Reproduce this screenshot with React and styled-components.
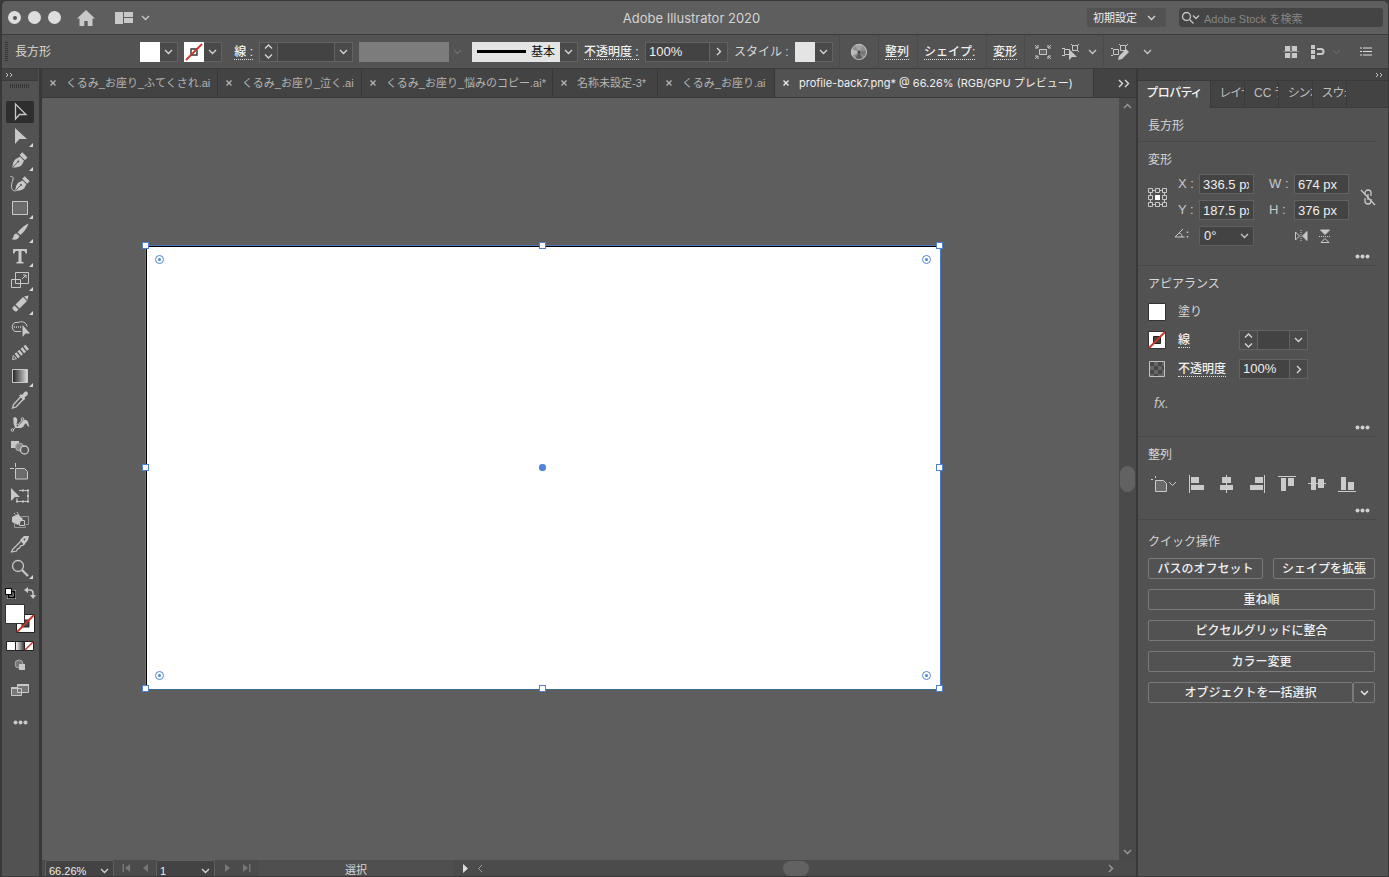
import React from "react";
import styled, { createGlobalStyle, css } from "styled-components";

const Global = createGlobalStyle`
  * { box-sizing: border-box; }
  html, body, #root { height: 100%; }
  body {
    margin: 0;
    background: #3a3a3a;
    color: #d6d6d6;
    font: 12px/16px "Liberation Sans", "Noto Sans CJK JP", sans-serif;
  }
  button, input, select { font: inherit; color: inherit; border: 0; padding: 0; margin: 0; background: none; outline: 0; border-radius: 0; }
  button { display: flex; align-items: center; justify-content: center; cursor: pointer; }
  h1, h2 { margin: 0; font: inherit; }
  svg { display: block; flex: none; }
  a { color: inherit; }
`;

const Window = styled.div`
  display: flex;
  flex-direction: column;
  min-height: 100vh;
  border: 1px solid #383838;
  border-left-width: 2px;
  border-radius: 6px 6px 0 0;
  overflow: hidden;
  background: #383838;
`;

/* ---------- title bar ---------- */
const TitleBar = styled.header`
  display: grid;
  grid-template-columns: 1fr auto 1fr;
  align-items: center;
  height: 34px;
  padding: 0 5px 0 6px;
  background: #5e5e5e;
  border-bottom: 1px solid #3c3c3c;
`;
const TitleLeft = styled.div`
  display: flex;
  align-items: center;
  gap: 7px;
`;
const Light = styled.button`
  width: 13px;
  height: 13px;
  border-radius: 50%;
  background: #dedede;
  &::after {
    content: "";
    width: 4px;
    height: 4px;
    border-radius: 50%;
    background: ${(p) => (p.$dot ? "#555" : "transparent")};
  }
`;
const TitleButton = styled.button`
  gap: 8px;
  color: #c9c9c9;
  margin-left: ${(p) => p.$ml}px;
`;
const Title = styled.h1`
  padding-right: 8px;
  font-family: Inter, sans-serif;
  font-size: 13px;
  color: #d4d4d4;
`;
const TitleRight = styled.div`
  display: flex;
  justify-content: flex-end;
  gap: 13px;
`;
const SelectWrap = styled.span`
  display: flex;
  position: relative;
  width: ${(p) => p.$w}px;
  height: ${(p) => p.$h}px;
  svg { position: absolute; right: ${(p) => p.$r || 5}px; top: 50%; margin-top: -3px; pointer-events: none; }
`;
const Select = styled.select`
  appearance: none;
  width: 100%;
  height: 100%;
  padding: 0 18px 0 ${(p) => p.$pl || 4}px;
  color: #eee;
  background: ${(p) => p.$bg || "#434343"};
  border: 1px solid ${(p) => p.$line || "#606060"};
  border-radius: 2px;
  font-size: ${(p) => p.$fs || 13}px;
`;
const Search = styled.label`
  display: flex;
  align-items: center;
  gap: 4px;
  width: 204px;
  height: 19px;
  padding-left: 2px;
  color: #c4c4c4;
  background: #444;
  border-radius: 3px;
  input { flex: 1; min-width: 0; height: 19px; padding-top: 2px; font-size: 11px; }
  input::placeholder { color: #868686; opacity: 1; }
`;

/* ---------- control bar ---------- */
const ControlBar = styled.div`
  display: flex;
  align-items: center;
  gap: 6px;
  height: 34px;
  padding: 0 8px 0 3px;
  background: #535353;
  border-bottom: 1px solid #3c3c3c;
  > * { flex: none; }
`;
const Grip = styled.span`
  width: ${(p) => (p.$h ? 20 : 3)}px;
  height: ${(p) => (p.$h ? 4 : 20)}px;
  background: repeating-linear-gradient(${(p) => (p.$h ? "90deg" : "180deg")}, #353535 0 1px, transparent 1px 2px);
`;
const ObjectName = styled.span`
  width: 120px;
  padding-left: 1px;
`;
const Rule = styled.span`
  width: 1px;
  height: 34px;
  background: #4b4b4b;
`;
const BarLabel = styled.span`
  width: ${(p) => p.$w}px;
  text-align: ${(p) => p.$align || "left"};
  white-space: nowrap;
`;
const BarLink = styled.a`
  color: #f0f0f0;
  font-weight: 500;
  line-height: 14px;
  text-decoration: none;
  border-bottom: 1px dotted #ddd;
  white-space: nowrap;
`;
const Combo = styled.div`
  display: flex;
  height: 20px;
  border: 1px solid #626262;
  background: #4a4a4a;
  > button { width: 17px; }
`;
const Swatch = styled.button`
  && { width: ${(p) => p.$w || 20}px; }
  height: 20px;
  margin: -1px 0 -1px -1px;
  background: ${(p) => p.$bg};
  color: #111;
  gap: 5px;
  padding: 0 5px;
`;
const Line = styled.span`
  flex: 1;
  height: 3px;
  background: #000;
`;
const Field = styled.input`
  width: ${(p) => p.$w}px;
  padding: 0 4px 0 3px;
  font-size: 13px;
  color: #eee;
  background: #434343;
  border: solid #626262;
  border-width: ${(p) => (p.$box ? "1px" : "0 1px 0 0")};
  height: ${(p) => (p.$box ? "20px" : "auto")};
  ${(p) => p.$mid && css`border-left-width: 1px;`}
`;
const Flat = styled.div`
  display: flex;
  width: 107px;
  height: 20px;
  opacity: 0.9;
  &::before { content: ""; width: 90px; background: #818181; }
  button { width: 17px; color: #707070; }
`;
const IconButton = styled.button`
  width: ${(p) => p.$w}px;
  height: 24px;
  gap: 6px;
  color: ${(p) => p.$color || "#c8c8c8"};
  justify-content: ${(p) => (p.$start ? "space-between" : "center")};
`;
const BarEnd = styled.div`
  display: flex;
  align-items: center;
  margin-left: auto;
  gap: 11px;
`;

/* ---------- body ---------- */
const Body = styled.div`
  display: flex;
  flex: 1;
  min-height: 0;
  gap: 2px;
`;
const ToolBox = styled.aside`
  width: 37px;
  background: #525252;
  display: flex;
  flex-direction: column;
  align-items: center;
  padding-right: 1px;
`;
const Strip = styled.div`
  display: flex;
  align-items: center;
  align-self: stretch;
  justify-content: ${(p) => (p.$end ? "flex-end" : "flex-start")};
  height: 12px;
  padding: 0 5px 0 3px;
  color: #c0c0c0;
  background: #434343;
  border-bottom: 1px solid #3a3a3a;
`;
const GripRow = styled.div`
  height: 19px;
  padding-top: 3px;
`;
const Tool = styled.button`
  position: relative;
  width: 28px;
  height: 22px;
  margin: 1px 0;
  border-radius: 2px;
  color: #c8c8c8;
  background: ${(p) => (p.$on ? "#2e2e2e" : "none")};
  &::after {
    content: "";
    display: ${(p) => (p.$more ? "block" : "none")};
    position: absolute;
    right: 1px;
    bottom: 0;
    width: 4px;
    height: 4px;
    background: #d8d8d8;
    clip-path: polygon(100% 0, 100% 100%, 0 100%);
  }
`;
const ToolRule = styled.hr`
  width: 28px;
  margin: 2px 0 2px;
  border: 0;
  border-top: 1px solid #484848;
`;
const ToolExtra = styled.button`
  width: 34px;
  height: ${(p) => p.$h}px;
  color: #c8c8c8;
`;
const Pair = styled.div`
  display: flex;
  justify-content: space-between;
  width: 32px;
  height: 15px;
  button { color: #c8c8c8; }
`;

const Document = styled.main`
  display: flex;
  flex-direction: column;
  flex: 1;
  min-width: 0;
  margin-left: 1px;
`;
const Tabs = styled.nav`
  display: flex;
  height: 29px;
  background: #434343;
  border-bottom: 1px solid #383838;
`;
const Tab = styled.div`
  display: flex;
  align-items: center;
  flex: none;
  width: ${(p) => p.$w}px;
  padding-left: 7px;
  gap: 9px;
  font-size: 11px;
  white-space: nowrap;
  color: ${(p) => (p.$on ? "#eee" : "#b4b4b4")};
  background: ${(p) => (p.$on ? "#525252" : "none")};
  border-right: 1px solid #383838;
  a {
    text-decoration: none;
    ${(p) => p.$on && css`font-family: Inter, "Noto Sans CJK JP", sans-serif;`}
  }
`;
const TabsMore = styled.button`
  margin-left: auto;
  width: 24px;
  color: #ddd;
`;
const View = styled.div`
  display: flex;
  flex: 1;
  min-height: 0;
`;
const Canvas = styled.section`
  position: relative;
  flex: 1;
  min-width: 0;
  background: #5e5e5e;
  overflow: hidden;
`;
const Artboard = styled.div`
  position: absolute;
  left: 103px;
  top: 147px;
  width: 796px;
  height: 445px;
  background: #fff;
  border: 1px solid #4a76c4;
  border-bottom-color: #3a6b8c;
  box-shadow: inset 1px 1px 0 #000;
`;
const Handle = styled.i`
  position: absolute;
  left: ${(p) => p.$x}%;
  top: ${(p) => p.$y}%;
  width: 7px;
  height: 7px;
  margin: -4px 0 0 -4px;
  background: #fff;
  border: 1px solid #4f80c8;
`;
const Corner = styled.i`
  position: absolute;
  ${(p) => p.$h}: 9px;
  ${(p) => p.$v}: 9px;
  width: 9px;
  height: 9px;
  border: 1px solid #4f86d8;
  border-radius: 50%;
  &::after {
    content: "";
    position: absolute;
    inset: 2px;
    border-radius: 50%;
    background: #4f86d8;
  }
`;
const Center = styled.i`
  position: absolute;
  left: 50%;
  top: 50%;
  width: 7px;
  height: 7px;
  margin: -4px;
  border-radius: 3px;
  background: #4f86d8;
`;
const VScroll = styled.div`
  display: flex;
  flex-direction: column;
  align-items: center;
  justify-content: space-between;
  width: 17px;
  padding: 5px 1px;
  color: #9c9c9c;
  background: #4a4a4a;
`;
const Thumb = styled.span`
  width: ${(p) => (p.$h ? 26 : 15)}px;
  height: ${(p) => (p.$h ? 15 : 26)}px;
  border-radius: 8px;
  background: #626262;
`;
const Status = styled.footer`
  display: flex;
  height: 16px;
  background: #4b4b4b;
  padding-left: 3px;
  overflow: hidden;
`;
const Nav = styled.div`
  display: flex;
  align-items: center;
  justify-content: center;
  gap: 9px;
  width: ${(p) => p.$w}px;
  color: #777;
`;
const Mode = styled.div`
  width: 194px;
  text-align: center;
  font-size: 11px;
  line-height: 20px;
  background: #4f4f4f;
`;
const HScroll = styled.div`
  display: flex;
  flex: 1;
  align-items: center;
  justify-content: space-between;
  padding: 0 22px 0 10px;
  color: #9c9c9c;
`;

/* ---------- properties panel ---------- */
const Panel = styled.aside`
  width: 250px;
  background: #525252;
`;
const PanelTabs = styled.nav`
  display: flex;
  height: 27px;
  background: #434343;
  border-bottom: 1px solid #3d3d3d;
`;
const PanelTab = styled.a`
  width: ${(p) => (p.$on ? 73 : 34)}px;
  height: ${(p) => (p.$on ? 27 : 26)}px;
  padding-left: 9px;
  overflow: hidden;
  white-space: nowrap;
  line-height: 25px;
  font-feature-settings: "palt";
  text-decoration: none;
  color: ${(p) => (p.$on ? "#f2f2f2" : "#bdbdbd")};
  font-weight: ${(p) => (p.$on ? 500 : 400)};
  background: ${(p) => (p.$on ? "#525252" : "none")};
  border-right: 1px solid #3a3a3a;
`;
const Section = styled.section`
  display: flex;
  flex-direction: column;
  height: ${(p) => p.$h}px;
  margin-right: 12px;
  padding: 10px 0 0 10px;
  border-bottom: ${(p) => (p.$last ? 0 : 1)}px solid #484848;
`;
const Heading = styled.h2`
  line-height: 17px;
`;
const QuickHeading = styled(Heading)`
  padding-top: 4px;
`;
const More = styled.button`
  align-self: flex-end;
  margin: auto 6px 4px 0;
  height: 10px;
  color: #cfcfcf;
`;
const TransformGrid = styled.div`
  display: grid;
  grid-template-columns: 30px 21px 55px 15px 25px 55px 1fr;
  grid-template-rows: 20px 20px 20px;
  row-gap: 6px;
  align-items: center;
  padding-top: 5px;
  color: #c8c8c8;
  font-size: 13px;
`;
const Reference = styled.button`
  grid-row: 1 / 3;
  justify-self: start;
`;
const FieldLabel = styled.label`
  grid-column: ${(p) => p.$c};
  white-space: nowrap;
`;
const AngleLabel = styled.span`
  grid-column: 1 / 3;
  justify-self: end;
  padding: 0 10px 6px 0;
`;
const LinkButton = styled.button`
  grid-column: 7;
  grid-row: 1 / 3;
  justify-self: end;
`;
const Flips = styled.div`
  grid-column: 5 / 7;
  display: flex;
  gap: 8px;
  padding-left: 24px;
`;
const Row = styled.div`
  display: flex;
  align-items: center;
  height: 20px;
  margin-top: ${(p) => p.$mt}px;
`;
const Chip = styled.button`
  width: 18px;
  height: 18px;
  margin-right: 12px;
`;
const RowName = styled.span`
  width: 61px;
`;
const Fx = styled.button`
  margin-left: 6px;
  font-size: 14px;
  font-style: italic;
  color: #c0c0c0;
`;
const AlignRow = styled.div`
  display: flex;
  align-items: center;
  gap: 8px;
  padding: 8px 0 0 3px;
  color: #cbcbcb;
  button { width: 22px; height: 24px; }
  button:first-child { width: 26px; margin-right: 1px; gap: 1px; }
`;
const Actions = styled.div`
  display: flex;
  flex-wrap: wrap;
  gap: 10px;
  padding-top: 7px;
  margin-right: 1px;
`;
const Action = styled.button`
  flex: ${(p) => p.$flex || "1 0 100%"};
  height: 21px;
  padding-top: 1px;
  border: 1px solid #7a7a7a;
  border-radius: 2px;
  color: #f0f0f0;
  font-weight: 500;
`;
const Split = styled.div`
  display: flex;
  flex: 1 0 100%;
`;

/* ---------- glyphs ---------- */
const Svg = ({ w = 20, h = w, children, ...rest }) => (
  <svg width={w} height={h} viewBox={`0 0 ${w} ${h}`} fill="none" stroke="currentColor" aria-hidden="true" {...rest}>
    {children}
  </svg>
);
const Down = () => <Svg w={9} h={6} strokeWidth="1.3"><path d="M1 1l3.5 3.5L8 1" /></Svg>;
const Up = () => <Svg w={9} h={6} strokeWidth="1.3"><path d="M1 5l3.5-3.5L8 5" /></Svg>;
const Right = () => <Svg w={6} h={9} strokeWidth="1.4"><path d="M1 1l3.5 3.5L1 8" /></Svg>;
const Double = ({ big }) =>
  big ? <Svg w={12} h={9} strokeWidth="1.4"><path d="M1 1l3.5 3.5L1 8M7 1l3.5 3.5L7 8" /></Svg>
    : <Svg w={8} h={6}><path d="M1 1l2 2-2 2M5 1l2 2-2 2" /></Svg>;
const Cross = () => <Svg w={8} strokeWidth="1.3"><path d="M1.500 1.500l5 5m0-5l-5 5" /></Svg>;
const Dots = () => <Svg w={15} h={5} fill="currentColor" stroke="none"><circle cx="2.500" cy="2.500" r="2" /><circle cx="7.500" cy="2.500" r="2" /><circle cx="12.500" cy="2.500" r="2" /></Svg>;
const Spin = () => <Svg w={9} h={15} strokeWidth="1.3"><path d="M1 4.500L4.500 1 8 4.500M1 10.500L4.500 14 8 10.500" /></Svg>;
const Tri = ({ flip, bar }) => (
  <Svg w={9} h={8} fill="currentColor" stroke="none">
    <g transform={flip ? "matrix(-1 0 0 1 9 0)" : undefined}>
      <path d="M1 0v8l5-4z" />{bar && <path d="M7 0h1.500v8H7z" />}
    </g>
  </Svg>
);
const NoneStroke = () => (
  <Svg w={20} stroke="none"><path fill="#fff" d="M0 0h20v20H0z" /><path stroke="#333" strokeWidth="1.400" d="M7 7h6v6H7z" /><path stroke="#c8372d" strokeWidth="1.800" d="M2 18L18 2" /></Svg>
);

const penNib = (
  <>
    <path fill="currentColor" stroke="none" d="M2 18.500C2.500 14 3.500 10.500 6 8.500l5-2.500 4.500 4.500-2.500 5c-2 2.500-6 3-11 3z" />
    <path fill="currentColor" stroke="none" d="M10.500 4L13.500 1 19.500 7 16.500 10z" />
    <path stroke="#525252" strokeWidth="1" d="M2.500 18l6-6" />
    <circle cx="9" cy="11.500" r="1.200" fill="#525252" stroke="none" />
  </>
);

const tools = [
  ["選択ツール", 0, <path d="M5.500 2v15l4-4.500h6.500z" strokeWidth="1.300" />],
  ["ダイレクト選択ツール", 1, <path d="M5 2v16l4.500-5h7.500z" fill="currentColor" stroke="none" />],
  ["ペンツール", 1, <g transform="translate(.5 1.500) scale(.87)">{penNib}</g>],
  ["曲線ツール", 0, <><g transform="translate(3.500 1.500) scale(.83)">{penNib}</g><path d="M.5 2.500c3.500-.5 3 2.500 1.500 6-1.500 5 0 8.500 3.500 8.500" /></>],
  ["長方形ツール", 1, <path d="M2.500 3.500h15v13h-15z" fill="#6b6b6b" />],
  ["ブラシツール", 1, <g fill="currentColor" stroke="none"><path d="M18.500 1.500C15 3 10 7 7.500 10.500l3 2.500C14 10 17.500 5 18.500 1.500z" /><path d="M6.500 11.500c-2 0-2.800 1.500-3 3s-1 2-2 2.500c3 1.500 7 .8 8-3z" /></g>],
  ["文字ツール", 1, <path d="M3 3h14v4.500h-1.500C15.300 5.500 14.500 5 13 5h-1.500v10c0 .8.500 1 2 1v1.500h-7V16c1.500 0 2-.2 2-1V5H7c-1.500 0-2.300.5-2.500 2.500H3z" fill="currentColor" stroke="none" />],
  ["拡大・縮小ツール", 1, <><path d="M5.500 2.500h13v11h-13zM1.500 9.500h9v8h-9z" /><path d="M12 9l4-4m-3 0h3v3" /></>],
  ["鉛筆ツール", 1, <g fill="currentColor" stroke="none"><path d="M5.500 10.500L13 3l4 4-7.500 7.500zM14 2.500L18.500 1.500 17.500 6zM4.500 11.500l4 4-2 2C5 18 2 15 2.500 13.500z" /></g>],
  ["シェイプ形成ツール", 0, <><path d="M5 13.500a5 5 0 0 1 0-9h3c4-2 8.500 0 9 4M5 13.500h6" /><path strokeDasharray="1 1" d="M4 9h8" strokeWidth="1.500" /><path d="M12.500 7v12l3-3.500H20z" fill="currentColor" stroke="none" /></>],
  ["Shaper ツール", 0, <><path d="M2.500 17.500l.8-4 3.200 3.200z" /><path d="M5.500 11l3.500 4.500M8.500 8.500l3.500 4.500M11.500 6l3.500 4.500M14.500 3.500L18 8" strokeWidth="2.500" /></>],
  ["グラデーションツール", 1, <><defs><linearGradient id="tg"><stop stopColor="#222" /><stop offset="1" stopColor="#ddd" /></linearGradient></defs><path d="M2.500 3.500h15v13h-15z" fill="url(#tg)" /></>],
  ["スポイトツール", 0, <><path d="M11 6.500l-7.500 8-1 3.500 3.500-1L13.500 9" strokeWidth="1.300" /><path d="M9 5.500l2-1.200 1 .7 2.500-3c2-1.500 4.500 1 3 3l-3 2.500.7 1.200-1.500 1.800z" fill="currentColor" stroke="none" /></>],
  ["パペットワープツール", 0, <><path d="M3 4c3-2 5 1 4 4s0 4 2.500 2.500S13 5 16 6s2 4 3.500 6.500C17 13 17 9 15.500 9.500S14 14 10.500 14 5 15 4 11 4 7 3 4z" fill="currentColor" stroke="none" /><path d="M3 16l4-4 6-7" /><circle cx="2.500" cy="16" r="1.300" fill="#525252" /><circle cx="7.500" cy="11.500" r="1.300" fill="#525252" /><circle cx="12.500" cy="5" r="1.300" fill="#525252" /></>],
  ["ブレンドツール", 0, <><path d="M1 3h8v7H1z" fill="currentColor" stroke="none" /><circle cx="9.500" cy="9" r="4" fill="#888" stroke="#aaa" /><circle cx="14.500" cy="12" r="4" fill="#555" strokeWidth="1.300" /></>],
  ["アートボードツール", 0, <><path d="M0 6.500h4M5.500 1v4" /><path d="M5.500 6.500h9l3 3v7.500h-12z" fill="#6b6b6b" /></>],
  ["自由変形ツール", 0, <><path d="M1 2v13l4-4h5z" fill="currentColor" stroke="none" /><path d="M9 4.500h9v11H7V12" /><g fill="currentColor" stroke="none"><path d="M17 3.500h2v2h-2zM17 9h2v2h-2zM17 14.500h2v2h-2zM12 3.500h2v2h-2zM6 14.500h2v2H6zM12 14.500h2v2h-2z" /></g></>],
  ["ライブペイントツール", 0, <><path d="M2 7l6-3 5 5-5 6-6-3z" fill="currentColor" stroke="none" /><path d="M4 3l3 3M7 2l2 3" strokeDasharray="2 1" /><path d="M9.500 10.500h5v5h-5z" /><path d="M11.500 6.500h7v8h-3M4.500 13v4.500h11V16" stroke="#999" /></>],
  ["スライスツール", 0, <><path d="M11 7l-8.500 8.500-1 2.500 5-1 1-2 2-1 1-2 3-1 1-2" strokeWidth="1.200" /><path d="M10 6l4-4h5l-1 4-4 5z" fill="currentColor" stroke="none" /><circle cx="14.500" cy="5.500" r="1" fill="#525252" stroke="none" /></>],
  ["ズームツール", 1, <><circle cx="8" cy="8" r="5.500" strokeWidth="1.300" /><path d="M12 12l6 6" strokeWidth="2.200" /></>],
];

const docs = [
  ["くるみ_お座り_ふてくされ.ai", 176],
  ["くるみ_お座り_泣く.ai", 144],
  ["くるみ_お座り_悩みのコピー.ai*", 191],
  ["名称未設定-3*", 105],
  ["くるみ_お座り.ai", 117],
  ["profile-back7.png* @ 66.26% (RGB/GPU プレビュー)", 319],
];

const aligns = [
  ["左揃え", <><path d="M3.500 2v18" /><path d="M5 4h8v6H5zM5 12h13v5H5z" fill="currentColor" stroke="none" /></>],
  ["水平中央揃え", <><path d="M10.500 2v18" /><path d="M6 4h9v6H6zM4 12h13v5H4z" fill="currentColor" stroke="none" /></>],
  ["右揃え", <><path d="M18.500 2v18" /><path d="M9 4h8v6H9zM4 12h13v5H4z" fill="currentColor" stroke="none" /></>],
  ["上揃え", <><path d="M2 3.500h18" /><path d="M5 5h5v13H5zM12 5h6v8h-6z" fill="currentColor" stroke="none" /></>],
  ["垂直中央揃え", <><path d="M2 10.500h18" /><path d="M5 4h5v13H5zM12 6h6v9h-6z" fill="currentColor" stroke="none" /></>],
  ["下揃え", <><path d="M2 18.500h18" /><path d="M5 4h5v13H5zM12 9h6v8h-6z" fill="currentColor" stroke="none" /></>],
];

const Picker = ({ label, value, w, h = 20, fs, pl, bg, line, r }) => (
  <SelectWrap $w={w} $h={h} $r={r}>
    <Select aria-label={label} $fs={fs} $pl={pl} $bg={bg} $line={line}><option>{value}</option></Select>
    <Down />
  </SelectWrap>
);

const squares = (pts, s = 3) => pts.map(([x, y]) => <path key={`${x}-${y}`} d={`M${x} ${y}h${s}v${s}h-${s}z`} />);

export default function App() {
  return (
    <>
      <Global />
      <Window>
        <TitleBar>
          <TitleLeft>
            <Light $dot aria-label="閉じる" />
            <Light aria-label="しまう" />
            <Light aria-label="拡大" />
            <TitleButton $ml={9} aria-label="ホーム">
              <Svg w={18} h={16} fill="currentColor" stroke="none"><path d="M9 0l9 8.500h-2.500V16h-4.800v-5H7.300v5H2.500V8.500H0z" /></Svg>
            </TitleButton>
            <TitleButton $ml={13} aria-label="ドキュメントの配置">
              <Svg w={18} h={12} fill="currentColor" stroke="none"><path d="M0 0h8v12H0zM9 0h9v5H9zM9 6h9v5H9z" /></Svg>
              <Down />
            </TitleButton>
          </TitleLeft>
          <Title>Adobe Illustrator 2020</Title>
          <TitleRight>
            <Picker label="ワークスペース" value="初期設定" w={79} h={19} fs={11} pl={5} bg="#525252" line="#525252" r={10} />
            <Search>
              <Svg w={19} h={14} strokeWidth="1.300"><circle cx="5.500" cy="5.500" r="4" /><path d="M8.500 8.500l4 4M12 4.500l3 3 3-3" /></Svg>
              <input aria-label="Adobe Stock を検索" placeholder="Adobe Stock を検索" />
            </Search>
          </TitleRight>
        </TitleBar>

        <ControlBar>
          <Grip />
          <ObjectName>長方形</ObjectName>
          <Combo><Swatch $bg="#fff" aria-label="塗り" /><button aria-label="塗りを選択"><Down /></button></Combo>
          <Combo><Swatch $bg="#fff" aria-label="線"><NoneStroke /></Swatch><button aria-label="線を選択"><Down /></button></Combo>
          <BarLabel $w={25} $align="right"><BarLink href="#stroke">線 :</BarLink></BarLabel>
          <Combo>
            <button aria-label="線幅の増減"><Spin /></button>
            <Field $w={58} $mid aria-label="線幅" />
            <button aria-label="線幅を選択"><Down /></button>
          </Combo>
          <Flat><button aria-label="線幅プロファイル"><Down /></button></Flat>
          <Combo><Swatch $w={88} $bg="#e4e4e4"><Line />基本</Swatch><button aria-label="ブラシ定義"><Down /></button></Combo>
          <BarLabel $w={55}><BarLink href="#opacity">不透明度 :</BarLink></BarLabel>
          <Combo><Field $w={64} aria-label="不透明度" defaultValue="100%" /><button aria-label="不透明度スライダー"><Right /></button></Combo>
          <BarLabel $w={55}>スタイル :</BarLabel>
          <Combo><Swatch $bg="#e4e4e4" aria-label="スタイル" /><button aria-label="スタイルを選択"><Down /></button></Combo>
          <Rule />
          <IconButton $w={26} aria-label="オブジェクトを再配色">
            <Svg w={18} stroke="none">
              <circle cx="9" cy="9" r="8" fill="#8e8e8e" />
              <path d="M9 9L5 2a8 8 0 0 1 8 0z" fill="#a4a4a4" /><path d="M9 9L1.500 6a8 8 0 0 0 .5 7z" fill="#bbb" />
              <path d="M9 9l4 7a8 8 0 0 1-8 0z" fill="#5c5c5c" /><path d="M9 9l8-2a8 8 0 0 1-2 7z" fill="#787878" />
              <circle cx="9" cy="9" r="1.500" fill="#444" /><circle cx="9" cy="9" r="7.500" stroke="#bcbcbc" />
            </Svg>
          </IconButton>
          <Rule />
          <BarLabel $w={26}><BarLink href="#align">整列</BarLink></BarLabel>
          <Rule />
          <BarLabel $w={56}><BarLink href="#shape">シェイプ:</BarLink></BarLabel>
          <Rule />
          <BarLabel $w={25}><BarLink href="#transform">変形</BarLink></BarLabel>
          <Rule />
          <IconButton $w={24} aria-label="オブジェクトを分離">
            <Svg w={18} h={16}><path d="M5.500 5.500h7v5h-7z" fill="#666" /><path d="M1 1l3 3m-3 0h3V1M17 1l-3 3m3 0h-3V1M1 15l3-3m-3 0h3v3M17 15l-3-3m3 0h-3v3" /></Svg>
          </IconButton>
          <IconButton $w={36} $start aria-label="類似オブジェクトを選択">
            <Svg w={20} h={18}><path d="M3.500 6.500h5v5h-5zM11.500 2.500h5v5h-5z" /><path d="M1 5.500h3M1 12.500h3M10 1l2 2M18 1l-2 2M16 7l2 2" /><path d="M8 6v11l3-3h5z" fill="currentColor" stroke="none" /></Svg>
            <Down />
          </IconButton>
          <Rule />
          <IconButton $w={42} $start aria-label="グループ編集">
            <Svg w={20} h={18}><path d="M3.500 6.500h5v5h-5zM10.500 2.500h5v5h-5z" /><path d="M1 5.500h2M1 12.500h2M9 1l2 2M18 1l-2 2" /><path d="M8 17l1-4 7-7 3 3-7 7z" fill="currentColor" stroke="none" /></Svg>
            <Down />
          </IconButton>
          <BarEnd>
            <IconButton $w={16} aria-label="ピクセルに整合">
              <Svg w={16} h={14} fill="currentColor" stroke="none"><path d="M2 1h5v5H2zM9 1h5v5H9zM2 8h5v5H2zM9 8h5v5H9z" /><path d="M0 6.500h16M8 0v14" stroke="#8a8a8a" /></Svg>
            </IconButton>
            <IconButton $w={31} $start aria-label="スナップ">
              <Svg w={16} h={14} fill="currentColor" stroke="none"><path d="M1 0h4v4H1zM1 5h4v4H1zM1 10h4v4H1z" /><path d="M7 4h4a2.500 2.500 0 0 1 0 5H7" fill="none" stroke="currentColor" strokeWidth="2" /></Svg>
              <Svg w={9} h={6} stroke="#707070"><path d="M1 1l3.500 3.500L8 1" /></Svg>
            </IconButton>
            <IconButton $w={28} aria-label="パネルメニュー" $color="#ddd">
              <Svg w={12} h={9}><path d="M3 1h9M3 4.500h9M3 8h9M0 1h2M0 4.500h2M0 8h2" strokeWidth="1.200" /></Svg>
            </IconButton>
          </BarEnd>
        </ControlBar>

        <Body>
          <ToolBox>
            <Strip><Double /></Strip>
            <GripRow><Grip $h as="div" /></GripRow>
            {tools.map(([name, more, art], i) => (
              <Tool key={name} $on={i === 0} $more={more} aria-label={name}><Svg>{art}</Svg></Tool>
            ))}
            <ToolRule />
            <Pair>
              <button aria-label="初期設定の塗りと線">
                <Svg w={12}><path d="M4.500 4.500h6v6h-6z" stroke="#ddd" strokeWidth="3" /><path d="M4.500 4.500h6v6h-6z" stroke="#000" strokeWidth="2" /><path d="M1.500 1.500h6v6h-6z" fill="#fff" stroke="#000" /></Svg>
              </button>
              <button aria-label="塗りと線を入れ替え">
                <Svg w={12}><path d="M3 3h3c2 0 3 1 3 3v3" strokeWidth="1.500" /><path d="M4 0v6L0 3zM6 8h6l-3 4z" fill="currentColor" stroke="none" /></Svg>
              </button>
            </Pair>
            <ToolExtra $h={38} aria-label="塗りと線">
              <Svg w={30} h={32}>
                <path d="M11.500 11.500h18v18h-18z" fill="#fff" stroke="#222" /><path d="M17 17h7v7h-7z" fill="#444" stroke="#222" /><path d="M12 29L29 12" stroke="#c8372d" strokeWidth="2" />
                <path d="M.5 1.500h19v19H.5z" fill="#fff" stroke="#333" />
              </Svg>
            </ToolExtra>
            <ToolExtra $h={16} aria-label="カラー・グラデーション・なし">
              <Svg w={28} h={10}>
                <defs><linearGradient id="sg"><stop stopColor="#fff" /><stop offset="1" stopColor="#333" /></linearGradient></defs>
                <path d="M.5.5h9v9h-9z" fill="#fff" stroke="#222" /><path d="M9.500.5h9v9h-9z" fill="url(#sg)" stroke="#222" /><path d="M18.500.5h9v9h-9z" fill="#fff" stroke="#222" /><path d="M19 9l8-8" stroke="#c8372d" strokeWidth="1.500" />
              </Svg>
            </ToolExtra>
            <ToolExtra $h={22} aria-label="描画方法">
              <Svg w={12}><circle cx="5" cy="5" r="4" fill="#777" stroke="#aaa" /><path d="M5 5h6v6H5z" fill="currentColor" stroke="none" /></Svg>
            </ToolExtra>
            <ToolExtra $h={28} aria-label="スクリーンモード">
              <Svg w={18} h={14}><path d="M.5 5.500h10v7H.5zM6.500 1.500h11v8h-11z" fill="#777" /><path d="M6 2h12M0 5h6" strokeWidth="2" /></Svg>
            </ToolExtra>
            <ToolExtra $h={36} aria-label="ツールバーを編集"><Dots /></ToolExtra>
          </ToolBox>

          <Document>
            <Tabs>
              {docs.map(([name, w], i) => (
                <Tab key={name} $w={w} $on={i === 5}>
                  <button aria-label={`${name} を閉じる`}><Cross /></button>
                  <a href="#doc">{name}</a>
                </Tab>
              ))}
              <TabsMore aria-label="ほかのドキュメント"><Double big /></TabsMore>
            </Tabs>
            <View>
              <Canvas>
                <Artboard>
                  <Corner $h="left" $v="top" /><Corner $h="right" $v="top" />
                  <Corner $h="left" $v="bottom" /><Corner $h="right" $v="bottom" />
                  <Center />
                  {[[0, 0], [50, 0], [100, 0], [0, 50], [100, 50], [0, 100], [50, 100], [100, 100]].map(([x, y]) => (
                    <Handle key={`${x}-${y}`} $x={x} $y={y} />
                  ))}
                </Artboard>
              </Canvas>
              <VScroll><Up /><Thumb /><Down /></VScroll>
            </View>
            <Status>
              <Picker label="ズーム" value="66.26%" w={69} h={21} fs={11} pl={3} />
              <Nav $w={42}><Tri flip bar /><Tri flip /></Nav>
              <Picker label="アートボード" value="1" w={59} h={21} fs={11} pl={3} />
              <Nav $w={44}><Tri /><Tri bar /></Nav>
              <Mode>選択</Mode>
              <HScroll>
                <Svg w={20} h={9}><path d="M0 0v9l5-4.500z" fill="#ddd" stroke="none" /><path d="M19 1l-3.500 3.500L19 8" /></Svg>
                <Thumb $h />
                <Right />
              </HScroll>
            </Status>
          </Document>

          <Panel>
            <Strip $end><Double /></Strip>
            <PanelTabs>
              <PanelTab href="#properties" $on>プロパティ</PanelTab>
              <PanelTab href="#layers">レイヤ</PanelTab>
              <PanelTab href="#cc">CC ラ</PanelTab>
              <PanelTab href="#symbols">シンボ</PanelTab>
              <PanelTab href="#swatches">スウォ</PanelTab>
            </PanelTabs>
            <Section $h={34}><Heading>長方形</Heading></Section>
            <Section $h={124}>
              <Heading>変形</Heading>
              <TransformGrid>
                <Reference aria-label="基準点">
                  <Svg w={19}><path d="M4 2.500h11M4 16.500h11M2.500 4v11M16.500 4v11" /><g fill="#525252">{squares([[0.5, 0.5], [7.5, 0.5], [14.5, 0.5], [0.5, 7.5], [14.5, 7.5], [0.5, 14.5], [7.5, 14.5], [14.5, 14.5]], 4)}</g><path d="M7 7h5v5H7z" fill="#fff" stroke="none" /></Svg>
                </Reference>
                <FieldLabel htmlFor="x" $c={2}>X :</FieldLabel><Field id="x" $w={55} $box defaultValue="336.5 px" />
                <FieldLabel htmlFor="w" $c={5}>W :</FieldLabel><Field id="w" $w={55} $box defaultValue="674 px" />
                <LinkButton aria-label="縦横比を固定">
                  <Svg w={16} h={18}><path d="M5 7V5a3 3 0 0 1 6 0v3M5 10v3a3 3 0 0 0 6 0v-2M8 6v6" strokeWidth="1.300" /><path d="M1 2l14 15" strokeWidth="1.300" /></Svg>
                </LinkButton>
                <FieldLabel htmlFor="y" $c={2}>Y :</FieldLabel><Field id="y" $w={55} $box defaultValue="187.5 px" />
                <FieldLabel htmlFor="h" $c={5}>H :</FieldLabel><Field id="h" $w={55} $box defaultValue="376 px" />
                <AngleLabel><Svg w={15} h={10}><path d="M10.500 9H1l8-8M5 5c2 0 3 2 3 4" /><path d="M13.500 3.500V5M13.500 8v1.500" strokeWidth="1.500" /></Svg></AngleLabel>
                <Picker label="回転" value="0°" w={55} />
                <Flips>
                  <button aria-label="水平方向に反転"><Svg w={16}><path d="M2.500 4v8l4-4z" /><path d="M14 3.500v9L9.500 8z" fill="currentColor" /><path d="M8 2v12" strokeDasharray="1 1" /></Svg></button>
                  <button aria-label="垂直方向に反転"><Svg w={16}><path d="M4 14.500h8L8 10.500z" /><path d="M3.500 2h9L8 6.500z" fill="currentColor" /><path d="M2 8.500h12" strokeDasharray="1 1" /></Svg></button>
                </Flips>
              </TransformGrid>
              <More aria-label="変形の詳細"><Dots /></More>
            </Section>
            <Section $h={171}>
              <Heading>アピアランス</Heading>
              <Row $mt={9}>
                <Chip aria-label="塗りの色"><Svg w={18}><path d="M.5.5h17v17H.5z" fill="#fff" stroke="#333" /></Svg></Chip>
                <RowName>塗り</RowName>
              </Row>
              <Row $mt={8}>
                <Chip aria-label="線の色"><Svg w={18}><path d="M.5.5h17v17H.5z" fill="#fff" stroke="#333" /><path d="M5.500 5.500h7v7h-7z" fill="#444" stroke="#222" /><path d="M1 17L17 1" stroke="#c8372d" strokeWidth="2" /></Svg></Chip>
                <RowName><BarLink href="#stroke">線</BarLink></RowName>
                <Combo>
                  <button aria-label="線幅の増減"><Spin /></button>
                  <Field $w={33} $mid aria-label="線の太さ" />
                  <button aria-label="線の太さを選択"><Down /></button>
                </Combo>
              </Row>
              <Row $mt={9}>
                <Chip aria-label="不透明マスク"><Svg w={18}><path d="M1.500 1.500h15v15h-15z" fill="#666" stroke="#c0c0c0" /><path d="M2 2h4v4H2zM10 2h4v4h-4zM6 6h4v4H6zM14 6h2v4h-2zM2 10h4v4H2zM10 10h4v4h-4zM6 14h4v2H6z" fill="#484848" stroke="none" /></Svg></Chip>
                <RowName><BarLink href="#opacity">不透明度</BarLink></RowName>
                <Combo><Field $w={50} aria-label="不透明度の値" defaultValue="100%" /><button aria-label="不透明度を調整"><Right /></button></Combo>
              </Row>
              <Row $mt={14}><Fx aria-label="効果を選択">fx.</Fx></Row>
              <More aria-label="アピアランスの詳細"><Dots /></More>
            </Section>
            <Section $h={83}>
              <Heading>整列</Heading>
              <AlignRow>
                <button aria-label="整列の基準"><Svg w={16}><path d="M0 3.500h3M4.500 0v3" strokeDasharray="2 1" /><path d="M4.500 4.500h8l3 3v8h-11z" fill="#6b6b6b" /></Svg><Svg w={9} h={6}><path d="M1 1l3.500 3.500L8 1" /></Svg></button>
                {aligns.map(([name, art]) => <button key={name} aria-label={name}><Svg w={22}>{art}</Svg></button>)}
              </AlignRow>
              <More aria-label="整列の詳細"><Dots /></More>
            </Section>
            <Section $h={200} $last>
              <QuickHeading>クイック操作</QuickHeading>
              <Actions>
                <Action $flex="115 0 0px">パスのオフセット</Action>
                <Action $flex="102 0 0px">シェイプを拡張</Action>
                <Action>重ね順</Action>
                <Action>ピクセルグリッドに整合</Action>
                <Action>カラー変更</Action>
                <Split>
                  <Action $flex="1">オブジェクトを一括選択</Action>
                  <Action $flex="0 0 22px" aria-label="一括選択のオプション"><Down /></Action>
                </Split>
              </Actions>
            </Section>
          </Panel>
        </Body>
      </Window>
    </>
  );
}
